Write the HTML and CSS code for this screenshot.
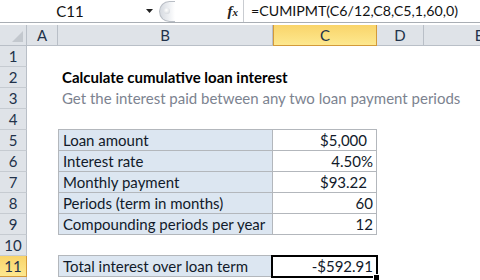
FILE: index.html
```html
<!DOCTYPE html>
<html>
<head>
<meta charset="utf-8">
<link rel="stylesheet" href="styles.css">
</head>
<body>
<div class="fbar">
  <div class="namebox">C11</div>
  <div class="dd"><svg width="8" height="5" viewBox="0 0 8 5"><path d="M0 0H7L3.5 4Z" fill="#222"/></svg></div>
  <div class="knob"><span class="dot"></span></div>
  <div class="fx">f<span class="x">x</span></div>
  <div class="formula">=CUMIPMT(C6/12,C8,C5,1,60,0)</div>
</div>
<div class="sheet">
  <div class="ch corner"><span class="tri"></span></div>
  <div class="ch">A</div>
  <div class="ch">B</div>
  <div class="ch sel">C</div>
  <div class="ch">D</div>
  <div class="ch last">E</div>

  <div class="rh">1</div><div></div><div></div><div></div><div></div><div></div>
  <div class="rh">2</div><div></div><div class="title">Calculate cumulative loan interest</div><div></div><div></div><div></div>
  <div class="rh">3</div><div></div><div class="sub">Get the interest paid between any two loan payment periods</div><div></div><div></div><div></div>
  <div class="rh">4</div><div></div><div></div><div></div><div></div><div></div>
  <div class="rh">5</div><div></div><div class="lbl top">Loan amount</div><div class="val top cur">$5,000</div><div></div><div></div>
  <div class="rh">6</div><div></div><div class="lbl">Interest rate</div><div class="val">4.50%</div><div></div><div></div>
  <div class="rh">7</div><div></div><div class="lbl">Monthly payment</div><div class="val cur">$93.22</div><div></div><div></div>
  <div class="rh">8</div><div></div><div class="lbl">Periods (term in months)</div><div class="val">60</div><div></div><div></div>
  <div class="rh">9</div><div></div><div class="lbl">Compounding periods per year</div><div class="val">12</div><div></div><div></div>
  <div class="rh">10</div><div></div><div></div><div></div><div></div><div></div>
  <div class="rh sel">11</div><div></div><div class="lbl top">Total interest over loan term</div><div class="val top active">-$592.91<span class="handle"></span></div><div></div><div></div>
  <div class="rh"></div><div></div><div></div><div></div><div></div><div></div>
</div>
</body>
</html>
```

FILE: styles.css
```css
html, body {
  margin: 0;
  padding: 0;
  background: #fff;
  width: 480px;
  height: 280px;
  overflow: hidden;
  font-family: Lato, "Open Sans", sans-serif;
  font-size: 15px;
  color: #111;
}

.fbar {
  display: flex;
  align-items: center;
  height: 22px;
  border-bottom: 1px solid #a9aeb4;
  margin-bottom: 2px;
  background: #fff;
}
.namebox {
  width: 140px;
  text-align: center;
  line-height: 22px;
}
.dd {
  width: 19px;
  display: flex;
  justify-content: center;
  align-items: center;
  height: 22px;
}
.knob {
  width: 16px;
  height: 21px;
  border-radius: 11px 0 0 11px;
  border: 1px solid #b9bec5;
  border-right: none;
  background: linear-gradient(90deg, #d6dae0, #eef0f3 60%, #fff);
  box-sizing: border-box;
  display: flex;
  align-items: center;
  padding-left: 4px;
}
.dot {
  width: 6px;
  height: 6px;
  border-radius: 50%;
  background: radial-gradient(circle at 40% 35%, #fff, #c9ced4);
}
.fx {
  width: 69px;
  text-align: right;
  padding-right: 5px;
  font-family: "Liberation Serif", serif;
  font-style: italic;
  font-weight: bold;
  font-size: 15px;
  line-height: 22px;
  border-right: 1px solid #c9ccd1;
  color: #222;
  height: 22px;
  box-sizing: border-box;
}
.fx .x { font-size: 11px; }
.formula {
  padding-left: 7px;
  line-height: 22px;
  font-size: 14.2px;
}

.sheet {
  display: grid;
  grid-template-columns: 27px 31px 215px 104px 47px 110px;
  grid-auto-rows: 21px;
}
.sheet > div {
  box-sizing: border-box;
  line-height: 20px;
  white-space: nowrap;
}
.ch {
  background: #dfe3e8;
  border-right: 1px solid #b9bfc7;
  border-bottom: 1px solid #b9bfc7;
  text-align: center;
  color: #22324a;
}
.ch.last { border-right: none; }
.ch.sel, .rh.sel {
  background: linear-gradient(#f9d46a, #fde88f);
  border-color: #d39a3a;
}
.ch.sel { border-left: 1px solid #d39a3a; }
.corner {
  position: relative;
}
.tri {
  position: absolute;
  right: 3px;
  bottom: 3px;
  width: 0;
  height: 0;
  border-left: 11px solid transparent;
  border-bottom: 11px solid #c3c8ce;
}
.rh {
  background: #dfe3e8;
  border-right: 1px solid #b9bfc7;
  border-bottom: 1px solid #c6cbd1;
  text-align: center;
  color: #22324a;
}
.title {
  font-weight: bold;
  padding-left: 4px;
  color: #000;
}
.sub {
  padding-left: 4px;
  color: #7c8390;
}
.lbl {
  background: #dce6f1;
  border-left: 1px solid #b3b7bc;
  border-right: 1px solid #b3b7bc;
  border-bottom: 1px solid #b3b7bc;
  padding-left: 4px;
  color: #111a2a;
}
.val {
  background: #fff;
  border-right: 1px solid #b3b7bc;
  border-bottom: 1px solid #b3b7bc;
  text-align: right;
  padding-right: 3px;
  color: #111a2a;
}
.val.cur { padding-right: 9px; }
.top { border-top: 1px solid #b3b7bc; margin-top: -1px; height: 22px; }
.active {
  position: relative;
}
.active::before {
  content: "";
  position: absolute;
  left: -2px;
  top: -1px;
  right: -2px;
  bottom: -2px;
  border: 2px solid #000;
}
.handle {
  position: absolute;
  right: -4px;
  bottom: -5px;
  width: 5px;
  height: 5px;
  background: #000;
  border: 1px solid #fff;
}
```
